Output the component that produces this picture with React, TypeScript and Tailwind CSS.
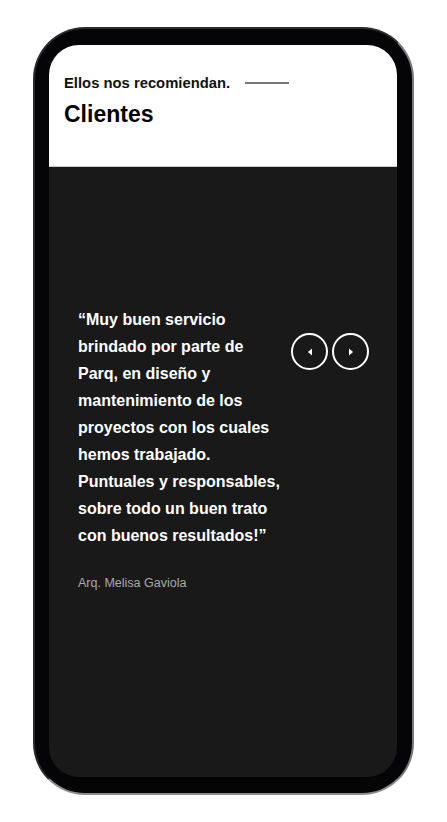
const quote =
    '“Muy buen servicio brindado por parte de Parq, en diseño y mantenimiento de los proyectos con los cuales hemos trabajado. Puntuales y responsables, sobre todo un buen trato con buenos resultados!”';

const ArrowButton = ({ dir }: { dir: 'left' | 'right' }) => {
    return (
        <button className="w-[37px] h-[37px] rounded-full border-2 border-white flex items-center justify-center">
            <svg width="6" height="8" viewBox="0 0 6 8">
                {dir === 'left' ? (
                    <polygon points="5,0.5 5,7.5 1,4" fill="#fff" />
                ) : (
                    <polygon points="1,0.5 1,7.5 5,4" fill="#fff" />
                )}
            </svg>
        </button>
    );
};

const Header = () => {
    return (
        <div className="bg-white h-[122px] border-b border-[#c9c9c9] pl-[15px] pt-[29px]">
            <div className="flex items-center">
                <span className="text-[14.8px] font-bold text-[#111] leading-[18px]">Ellos nos recomiendan.</span>
                <span className="ml-[15px] w-[44px] h-[2px] bg-[#777]"></span>
            </div>
            <h1 className="mt-[9px] text-[23px] font-bold text-black leading-[27px]">Clientes</h1>
        </div>
    );
};

const Testimonial = () => {
    return (
        <div className="flex-1 bg-[#191919] pt-[139px] pl-[29px]">
            <div className="flex items-start">
                <div className="w-[207px]">
                    <p className="text-white font-bold text-[16px] leading-[27px]">{quote}</p>
                    <p className="mt-[24px] text-[12.5px] text-[#a9a9a9] leading-[20px]">Arq. Melisa Gaviola</p>
                </div>
                <div className="flex gap-[4px] ml-[6px] mt-[27px]">
                    <ArrowButton dir="left" />
                    <ArrowButton dir="right" />
                </div>
            </div>
        </div>
    );
};

const App = () => {
    return (
        <div
            className="w-[447px] h-[822px] bg-white pt-[27px] pl-[33px]"
            style={{ fontFamily: '"Liberation Sans", Arial, sans-serif' }}
        >
            <div className="w-[381px] h-[768px] rounded-[52px] bg-[#050507] border-2 border-[#2b2b2b] border-r-[#7a7a7a] border-b-[#8c8c8c] pl-[14px] pr-[15px] pt-[16px] pb-[16px]">
                <div className="w-[348px] h-[732px] rounded-[30px] overflow-hidden flex flex-col">
                    <Header />
                    <Testimonial />
                </div>
            </div>
        </div>
    );
};

export default App;
